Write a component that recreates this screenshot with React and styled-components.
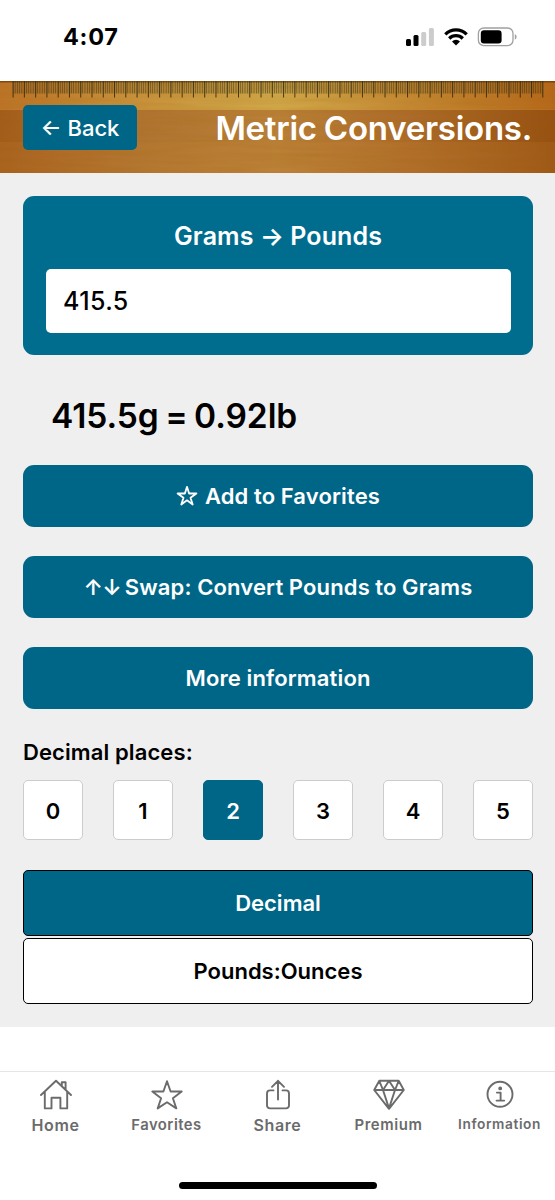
import React, { useState } from "react";
import styled, { createGlobalStyle } from "styled-components";

const decimals = [0, 1, 2, 3, 4, 5];

// one tick for every millimetre, a long one every tenth
const ticks = Array.from({ length: 471 }, (_, i) => i);

const Wood = () => (
  <WoodSvg viewBox="0 0 555 92" preserveAspectRatio="none">
    <defs>
      <linearGradient id="rule" x1="0" x2="1" y1="0" y2="0">
        <stop offset="0" stopColor="#bd7428" />
        <stop offset="0.25" stopColor="#c7913b" />
        <stop offset="0.5" stopColor="#d0a749" />
        <stop offset="0.75" stopColor="#c48733" />
        <stop offset="1" stopColor="#b5681a" />
      </linearGradient>
      <linearGradient id="board" x1="0" x2="1" y1="0" y2="0">
        <stop offset="0" stopColor="#a35d1b" />
        <stop offset="0.25" stopColor="#b07431" />
        <stop offset="0.5" stopColor="#b98038" />
        <stop offset="0.75" stopColor="#ac6a28" />
        <stop offset="1" stopColor="#975112" />
      </linearGradient>
      <linearGradient id="edge" x1="0" x2="0" y1="0" y2="1">
        <stop offset="0" stopColor="#5a2a00" stopOpacity="0.75" />
        <stop offset="1" stopColor="#5a2a00" stopOpacity="0" />
      </linearGradient>
      <filter id="grain" x="0" y="0" width="100%" height="100%">
        <feTurbulence type="fractalNoise" baseFrequency="0.012 0.18" numOctaves="3" seed="7" />
        <feColorMatrix values="0 0 0 0 0.3  0 0 0 0 0.12  0 0 0 0 0  0.7 0 0 0 -0.22" />
      </filter>
    </defs>
    <rect width="555" height="29" fill="url(#rule)" />
    <rect y="29" width="555" height="63" fill="url(#board)" />
    <rect y="61" width="555" height="31" fill="#d08a3a" opacity="0.16" />
    <rect width="555" height="92" filter="url(#grain)" opacity="0.4" />
    <rect y="28" width="555" height="1" fill="#d6a050" opacity="0.12" />
    <rect width="555" height="2.5" fill="url(#edge)" />
    <rect x="12.5" width="530" height="12.5" fill="#5d5420" opacity="0.12" />
    {ticks.map((i) => (
      <rect
        key={i}
        x={12.6 + i * 1.127}
        width={i % 10 === 0 ? 1 : 0.5}
        height={i % 10 === 0 ? 16.5 : 12.5}
        fill="#2d2812"
        opacity={i % 10 === 0 ? 0.85 : i % 2 === 0 ? 0.82 : 0.1}
      />
    ))}
  </WoodSvg>
);

const Signal = () => (
  <svg width="29" height="18" viewBox="0 0 29 18">
    <rect x="0" y="11" width="5" height="7" rx="1.5" fill="#000" />
    <rect x="7.5" y="7" width="5" height="11" rx="1.5" fill="#000" />
    <rect x="15.2" y="4" width="5" height="14" rx="1.5" fill="#ccc" />
    <rect x="22.9" y="0" width="5" height="18" rx="1.5" fill="#ccc" />
  </svg>
);

const Wifi = () => (
  <svg width="24" height="18" viewBox="0 0 24 18">
    <g fill="none" stroke="#000" strokeWidth="3.2">
      <path d="M1.3 6.3a15.2 15.2 0 0 1 21.4 0" />
      <path d="M5.2 10.5a9.6 9.6 0 0 1 13.6 0" />
    </g>
    <path d="M8 13.5a5.7 5.7 0 0 1 8 0l-4 4z" fill="#000" />
  </svg>
);

const Battery = () => (
  <svg width="41" height="20" viewBox="0 0 41 20">
    <rect x="1.4" y="1" width="34.6" height="17.6" rx="5.4" fill="none" stroke="#a0a0a0" strokeWidth="1.3" />
    <rect x="3.8" y="3.2" width="20.8" height="13.2" rx="3.2" fill="#000" />
    <path d="M37.8 6.9a3.2 3.2 0 0 1 0 5.8z" fill="#a0a0a0" />
  </svg>
);

const FavoriteIcon = () => (
  <svg width="22" height="22" viewBox="0 0 22 22" fill="none" stroke="#fff" strokeWidth="1.8" strokeLinejoin="round">
    <path d="M11 1.8l2.1 6.7h7.3l-5.9 4.2 2.2 6.8-5.7-4.2-5.7 4.2 2.2-6.8-5.9-4.2h7.3z" />
  </svg>
);

const HomeIcon = () => (
  <svg width="32" height="32" viewBox="0 0 32 32">
    <path d="M1 16 16 1.8 31 16M21.8 7V3.2h3.8v7.4M4.8 13v16.4h6.7V18.8h8.9v10.6h6.8V13" />
  </svg>
);

const StarIcon = () => (
  <svg width="32" height="32" viewBox="0 0 32 32">
    <path d="M16 2.2l3.6 10.3h11.1l-8.8 6.7 3.4 10.2-9.3-6.2-9.3 6.2 3.4-10.2-8.8-6.7h11.1z" />
  </svg>
);

const ShareIcon = () => (
  <svg width="32" height="32" viewBox="0 0 32 32">
    <path d="M11.5 11.4H8a3 3 0 0 0-3 3v12a3 3 0 0 0 3 3h16a3 3 0 0 0 3-3v-12a3 3 0 0 0-3-3h-3.5M16 20.5V1.8M10 7.8l6-6 6 6" />
  </svg>
);

const GemIcon = () => (
  <svg width="32" height="32" viewBox="0 0 32 32">
    <path d="M6.3 1.8h19.4L30.8 11 16 29.8 1.2 11zM1.2 11h29.6M6.3 1.8 10 11l6 18.4L22 11l3.7-9.2M10 11l6-9.2 6 9.2" />
  </svg>
);

const InfoIcon = () => (
  <svg width="32" height="32" viewBox="0 0 32 32">
    <circle cx="16" cy="15.3" r="12.5" />
    <path d="M12.9 13.6h3.7v7.8M12.6 21.6h7.6" />
    <circle cx="16.2" cy="9.4" r="1" fill="#6b6b6b" />
  </svg>
);

const tabs = [
  { label: "Home", size: 16, spacing: 0.6, Icon: HomeIcon },
  { label: "Favorites", size: 14.8, spacing: 0.5, Icon: StarIcon },
  { label: "Share", size: 16, spacing: 0.6, Icon: ShareIcon },
  { label: "Premium", size: 14.9, spacing: 0.6, Icon: GemIcon },
  { label: "Information", size: 13.7, spacing: 0.6, Icon: InfoIcon },
];

const App = () => {
  const [grams, setGrams] = useState("415.5");
  const [places, setPlaces] = useState(2);
  const [format, setFormat] = useState("decimal");

  const pounds = (Number(grams) / 453.59237).toFixed(places);

  return (
    <Phone>
      <GlobalStyle />
      <StatusBar>
        <Clock>4:07</Clock>
        <StatusIcons>
          <Signal />
          <Wifi />
          <Battery />
        </StatusIcons>
      </StatusBar>

      <Header>
        <Wood />
        <BackButton>← Back</BackButton>
        <Title>Metric Conversions.</Title>
      </Header>

      <Main>
        <Converter>
          <ConverterTitle>Grams → Pounds</ConverterTitle>
          <Amount value={grams} onChange={(e) => setGrams(e.target.value)} />
        </Converter>
        <Result>{grams}g = {pounds}lb</Result>

        <Actions>
          <ActionButton>
            <FavoriteIcon />
            Add to Favorites
          </ActionButton>
          <ActionButton>
            <Arrows>↑↓</Arrows>
            Swap: Convert Pounds to Grams
          </ActionButton>
          <ActionButton>More information</ActionButton>
        </Actions>

        <Label>Decimal places:</Label>
        <PlacesRow>
          {decimals.map((n) => (
            <PlaceButton key={n} $active={n === places} onClick={() => setPlaces(n)}>
              {n}
            </PlaceButton>
          ))}
        </PlacesRow>

        <Formats>
          <FormatButton $active={format === "decimal"} onClick={() => setFormat("decimal")}>
            Decimal
          </FormatButton>
          <FormatButton $active={format === "ounces"} onClick={() => setFormat("ounces")}>
            Pounds:Ounces
          </FormatButton>
        </Formats>
      </Main>

      <TabBar>
        {tabs.map(({ label, size, spacing, Icon }) => (
          <Tab key={label}>
            <Icon />
            <TabLabel $size={size} $spacing={spacing}>{label}</TabLabel>
          </Tab>
        ))}
      </TabBar>
      <HomeIndicator />
    </Phone>
  );
};

export default App;

const GlobalStyle = createGlobalStyle`
  * {
    box-sizing: border-box;
  }
  body {
    margin: 0;
    background: #fff;
  }
  button, input {
    font: inherit;
    border: 0;
    padding: 0;
    outline: none;
  }
`;

const Phone = styled.div`
  display: flex;
  flex-direction: column;
  align-items: stretch;
  width: 555px;
  height: 1200px;
  overflow: hidden;
  background: #fff;
  color: #000;
  font-family: Inter, "Liberation Sans", sans-serif;
`;

const StatusBar = styled.div`
  display: flex;
  justify-content: space-between;
  height: 81px;
  padding: 22px 37px 0 63px;
`;

const Clock = styled.span`
  font-size: 23.5px;
  line-height: 30px;
  font-weight: 700;
  letter-spacing: 0.7px;
`;

const StatusIcons = styled.div`
  display: flex;
  align-items: center;
  gap: 9px;
  height: 30px;
`;

const Header = styled.header`
  position: relative;
  display: flex;
  align-items: flex-start;
  justify-content: space-between;
  height: 92px;
  padding: 24px 23px 0;
`;

const WoodSvg = styled.svg`
  position: absolute;
  inset: 0;
  width: 100%;
  height: 100%;
`;

const BackButton = styled.button`
  position: relative;
  width: 114px;
  height: 45px;
  border-radius: 5px;
  background: #006687;
  color: #fff;
  font-size: 22px;
  font-weight: 500;
`;

const Title = styled.h1`
  position: relative;
  margin: 0;
  font-size: 33px;
  line-height: 46px;
  font-weight: 600;
  letter-spacing: -0.25px;
  word-spacing: -1px;
  color: #fff;
`;

const Main = styled.main`
  display: flex;
  flex-direction: column;
  height: 854px;
  padding: 23px 22px 0 23px;
  background: #efefef;
`;

const Converter = styled.section`
  display: flex;
  flex-direction: column;
  height: 159px;
  padding: 23px 22.5px 0;
  border-radius: 11px;
  background: #006d8f;
`;

const ConverterTitle = styled.h2`
  margin: 0 0 15.5px;
  font-size: 25px;
  line-height: 34px;
  font-weight: 600;
  letter-spacing: 0.1px;
  text-align: center;
  color: #fff;
`;

const Amount = styled.input`
  width: 100%;
  height: 64px;
  padding: 0 17.5px;
  border-radius: 5px;
  background: #fff;
  color: #000;
  font-size: 25px;
  font-weight: 500;
  letter-spacing: 0.4px;
`;

const Result = styled.p`
  margin: 38px 0 26px 28px;
  font-size: 33.5px;
  line-height: 46px;
  font-weight: 600;
  letter-spacing: -0.05px;
  word-spacing: -2px;
`;

const Actions = styled.div`
  display: flex;
  flex-direction: column;
  gap: 28.7px;
`;

const ActionButton = styled.button`
  display: flex;
  align-items: center;
  justify-content: center;
  gap: 7px;
  height: 62.3px;
  border-radius: 11px;
  background: #006687;
  color: #fff;
  font-size: 22px;
  font-weight: 600;
  letter-spacing: 0.15px;
  word-spacing: -0.2px;
`;

const Arrows = styled.span`
  margin-right: -3px;
  letter-spacing: -0.8px;
`;

const Label = styled.p`
  margin: 28px 0 13px;
  font-size: 22px;
  line-height: 30px;
  font-weight: 600;
  letter-spacing: 0.1px;
`;

const PlacesRow = styled.div`
  display: flex;
  justify-content: space-between;
`;

const PlaceButton = styled.button`
  width: 60px;
  height: 60px;
  border: 1px solid ${(props) => (props.$active ? "#006687" : "#ccc")};
  border-radius: 5px;
  background: ${(props) => (props.$active ? "#006687" : "#fff")};
  color: ${(props) => (props.$active ? "#fff" : "#000")};
  padding-top: 1px;
  font-size: 22px;
  font-weight: 600;
`;

const Formats = styled.div`
  display: flex;
  flex-direction: column;
  gap: 2px;
  margin-top: 30px;
`;

const FormatButton = styled.button`
  height: 66px;
  border: 1.5px solid #000;
  border-radius: 5px;
  background: ${(props) => (props.$active ? "#006687" : "#fff")};
  color: ${(props) => (props.$active ? "#fff" : "#000")};
  font-size: 22px;
  font-weight: 600;
`;

const TabBar = styled.nav`
  display: grid;
  grid-template-columns: repeat(5, 1fr);
  height: 110.5px;
  margin-top: 44px;
  border-top: 1px solid #e6e6e6;
`;

const Tab = styled.a`
  display: flex;
  flex-direction: column;
  align-items: center;
  padding-top: 7px;
  color: #6b6b6b;

  svg {
    fill: none;
    stroke: #6b6b6b;
    stroke-width: 1.9;
    stroke-linejoin: round;
    stroke-linecap: round;
  }
`;

const TabLabel = styled.span`
  margin-top: 3px;
  font-size: ${(props) => props.$size}px;
  line-height: ${(props) => (props.$size < 14 ? 20 : 22)}px;
  font-weight: 560;
  letter-spacing: ${(props) => props.$spacing}px;
`;

const HomeIndicator = styled.div`
  align-self: center;
  width: 198px;
  height: 7px;
  border-radius: 4px;
  background: #000;
`;
